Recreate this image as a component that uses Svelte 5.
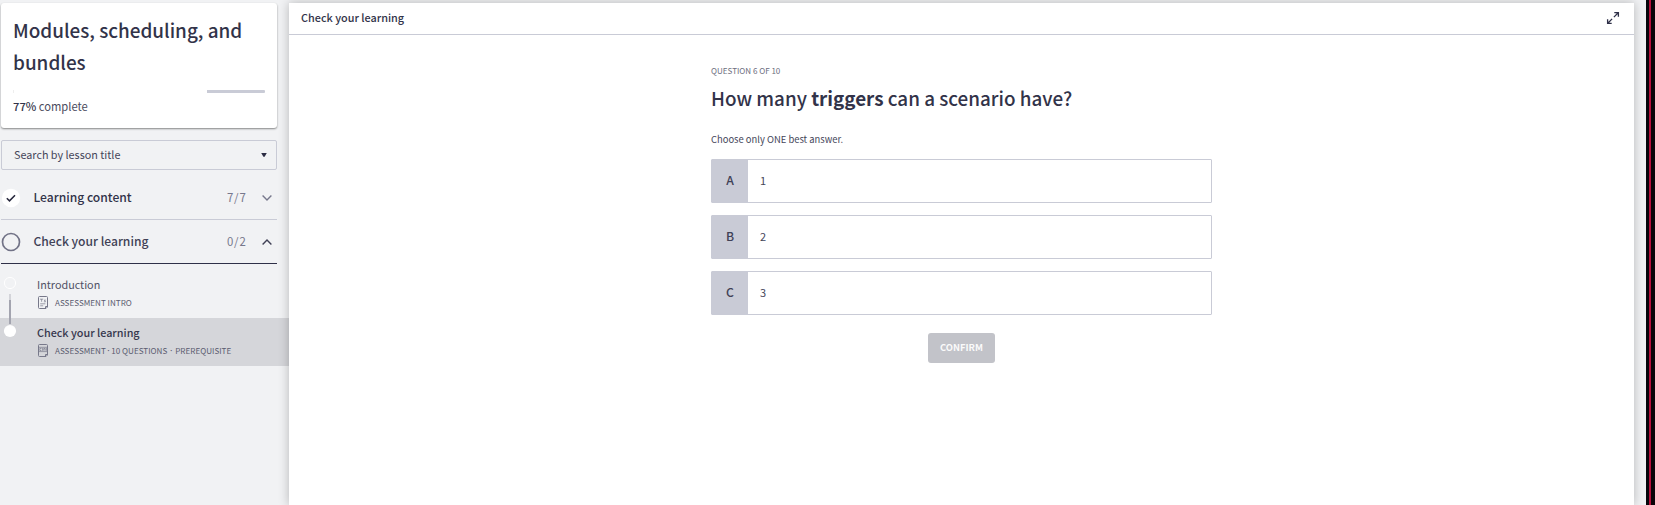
<script>
  const answers = [
    { key: 'A', text: '1' },
    { key: 'B', text: '2' },
    { key: 'C', text: '3' }
  ];
</script>

<div class="app">
  <aside>
    <section class="card">
      <h1>Modules, scheduling, and<br />bundles</h1>
      <div class="track"><i class="dot"></i><i class="rest"></i></div>
      <p><b>77%</b> complete</p>
    </section>

    <div class="search">
      <span>Search by lesson title</span>
      <svg width="8" height="6" viewBox="0 0 8 6"><path d="M1.2 1h5.6L4.6 4.8H3.4z" fill="#2b2c43" /></svg>
    </div>

    <div class="module">
      <svg class="status" width="20" height="20" viewBox="0 0 20 20">
        <circle cx="10" cy="10" r="9.2" fill="#fff" />
        <path d="M5.8 10.3l2.7 2.6 5.5-5.6" fill="none" stroke="#25263b" stroke-width="1.5" />
      </svg>
      <span class="name n1">Learning content</span>
      <span class="count">7/7</span>
      <svg class="chev" width="10" height="6" viewBox="0 0 10 6"><path d="M.6.6L5 5 9.4.6" fill="none" stroke="#77788c" stroke-width="1.4" /></svg>
    </div>
    <div class="module open">
      <svg class="status" width="20" height="20" viewBox="0 0 20 20">
        <circle cx="10" cy="10" r="8.5" fill="none" stroke="#717286" stroke-width="1.7" />
      </svg>
      <span class="name n2">Check your learning</span>
      <span class="count">0/2</span>
      <svg class="chev" width="10" height="6" viewBox="0 0 10 6"><path d="M.6 5.4L5 1l4.4 4.4" fill="none" stroke="#404156" stroke-width="1.4" /></svg>
    </div>

    <div class="lessons">
      <svg class="line" width="20" height="68" viewBox="0 0 20 68">
        <circle cx="10" cy="8" r="5.6" fill="none" stroke="#fff" stroke-width="1" />
        <path d="M10 19v6" stroke="#d3d4d9" stroke-width="2" />
        <path d="M10 25v24" stroke="#a3a4af" stroke-width="2" />
        <circle cx="10" cy="56" r="6.1" fill="#fff" />
      </svg>
      <div class="lesson">
        <div class="title t1">Introduction</div>
        <div class="meta">
          <svg width="11" height="13" viewBox="0 0 11 13" fill="none" stroke="#77788a">
            <path d="M1.5.5h7a1 1 0 0 1 1 1v9.5L8 12.5H1.5a1 1 0 0 1-1-1v-10a1 1 0 0 1 1-1zM9.5 10.5H7.5v2" />
            <path d="M2 3.2h3.2M3.6 3.2v2.6M7.8 4.1H6.3l1.2 1.7H5.9M2.2 7.8h5.2M2.2 9.8h3" stroke-width=".7" />
          </svg>
          <span>ASSESSMENT INTRO</span>
        </div>
      </div>
      <div class="lesson active">
        <div class="title t2">Check your learning</div>
        <div class="meta">
          <svg width="11" height="13" viewBox="0 0 11 13" fill="none" stroke="#77788a">
            <path d="M1.5.5h7a1 1 0 0 1 1 1v9.5L8 12.5H1.5a1 1 0 0 1-1-1v-10a1 1 0 0 1 1-1zM9.5 10.5H7.5v2" />
            <path d="M.5 3.3h9M.5 7.6h9M3.4 4.5H1.8v2h1.6M4.6 4v2.8M5.8 6.6V4.5h1.3v2.1M8.4 4v2.8" stroke-width=".7" />
          </svg>
          <span>ASSESSMENT<i class="sep s1">·</i>10 QUESTIONS<i class="sep s2">·</i>PREREQUISITE</span>
        </div>
      </div>
    </div>
  </aside>

  <main>
    <header>
      <span>Check your learning</span>
      <svg width="14" height="14" viewBox="0 0 14 14" fill="none" stroke="#2f3048" stroke-width="1.3">
        <path d="M8.3 1.6h4.1v4.1M12.2 1.8L7.9 6.1M5.7 12.4H1.6V8.3M1.8 12.2l4.3-4.3" />
      </svg>
    </header>
    <section class="quiz">
      <div class="step">QUESTION 6 OF 10</div>
      <h2>How many <b>triggers</b> can a scenario have?</h2>
      <div class="hint">Choose only ONE best answer.</div>
      {#each answers as a}
        <div class="answer">
          <div class="key">{a.key}</div>
          <div class="text">{a.text}</div>
        </div>
      {/each}
      <button>CONFIRM</button>
    </section>
  </main>
  <div class="edge"></div>
</div>

<style>
  :global(body) { margin: 0; overflow: hidden; }
  .app {
    display: flex;
    width: 1655px;
    height: 505px;
    overflow: hidden;
    background: #f1f2f4;
    color: #323349;
    font-family: "Noto Sans CJK SC", "Noto Sans", sans-serif;
    font-size: 11px;
    white-space: nowrap;
  }
  .app * { box-sizing: border-box; }
  aside { width: 289px; flex: none; padding-top: 3px; }
  .card {
    width: 276px;
    height: 125px;
    margin-left: 1px;
    padding: 11px 12px 0;
    border-radius: 3px;
    background: #fff;
    box-shadow: 0 1px 2px rgba(0, 0, 0, .45);
  }
  h1 { margin: 0; font-size: 18.9px; line-height: 32px; font-weight: 500; }
  .track { display: flex; justify-content: space-between; height: 3px; margin-top: 12px; }
  .dot { width: 1px; background: #eee; }
  .rest { width: 58px; border-radius: 0 1px 1px 0; background: #c9cbd6; }
  .card p { margin: 3px 0 0; line-height: 20px; font-size: 11.2px; color: #4b4c5e; }
  .card p b { font-weight: 500; color: #323349; }
  .search {
    display: flex;
    align-items: center;
    justify-content: space-between;
    width: 276px;
    height: 30px;
    margin: 12px 0 6px 1px;
    padding: 0 8px 0 12px;
    border: 1px solid #c9cbd6;
    border-radius: 2px;
    font-size: 10.8px;
    color: #45465a;
  }
  .search span { line-height: 16px; padding-bottom: 2px; }
  .module {
    display: flex;
    align-items: center;
    width: 276px;
    height: 44px;
    margin-left: 1px;
    border-bottom: 1px solid #c9cbd6;
    font-size: 12.1px;
    line-height: 18px;
  }
  .module.open { border-bottom-color: #2f3048; }
  .name { margin-left: 12.5px; padding-bottom: 2px; flex: 1; font-weight: 500; }
  .n2 { color: #404156; }
  .count { width: 18px; padding-bottom: 1px; color: #77788c; font-size: 11.4px; letter-spacing: .8px; }
  .chev { margin: 0 5px 0 17px; }
  .lessons { position: relative; padding-top: 6px; }
  .line { position: absolute; left: 0; top: 11px; }
  .lesson { height: 48px; padding: 5px 0 0 37px; }
  .active { background: #d5d6da; }
  .title { line-height: 18px; font-size: 10.8px; color: #505165; }
  .t2 { font-weight: 500; color: #36374d; }
  .meta { display: flex; align-items: center; height: 18px; margin-left: 1px; gap: 6px; font-size: 8.1px; color: #5b5c70; }
  .sep { display: inline-block; font: normal 9px/1 "Noto Sans", sans-serif; text-align: center; }
  .s1 { width: 5.5px; }
  .s2 { width: 8px; }
  main {
    position: relative;
    display: flex;
    flex-direction: column;
    width: 1345px;
    flex: none;
    margin-top: 3px;
    background: #fff;
    box-shadow: 0 0 10px rgba(0, 0, 0, .25);
  }
  header {
    display: flex;
    align-items: center;
    justify-content: space-between;
    height: 32px;
    padding: 0 14px 2px 12px;
    border-bottom: 1px solid #c9cbd6;
    font-weight: 500;
    font-size: 10.85px;
    line-height: 16px;
  }
  header span { padding-bottom: 2px; }
  .quiz { display: flex; flex-direction: column; width: 501px; margin-left: 422px; padding-top: 27px; }
  .step { height: 18px; line-height: 18px; font-size: 8.05px; color: #6d6e7e; }
  h2 { margin: 4px 0 0; font-size: 18.85px; line-height: 28px; font-weight: 500; }
  h2 b { font-weight: 700; }
  .hint { height: 18px; margin: 18px 0 11px; line-height: 18px; font-size: 9.42px; color: #45465a; }
  .answer {
    display: flex;
    height: 44px;
    margin-bottom: 12px;
    border: 1px solid #c9cbd6;
    border-radius: 1px;
    line-height: 40px;
  }
  .key { width: 36px; background: #c9cbd6; text-align: center; font-weight: 500; font-size: 12.2px; color: #404156; }
  .text { padding-left: 12px; color: #45465a; }
  button {
    align-self: center;
    width: 67px;
    height: 30px;
    margin-top: 6px;
    padding: 0 0 2px;
    border: 0;
    border-radius: 3px;
    background: #c2c3c9;
    color: #fafafa;
    font: 700 9.4px "Noto Sans CJK SC", sans-serif;
  }
  .edge {
    width: 9px;
    margin-left: auto;
    background: linear-gradient(90deg, #06060c 0 3px, #b60f3b 3px 5px, #0a0308 5px);
  }
</style>
